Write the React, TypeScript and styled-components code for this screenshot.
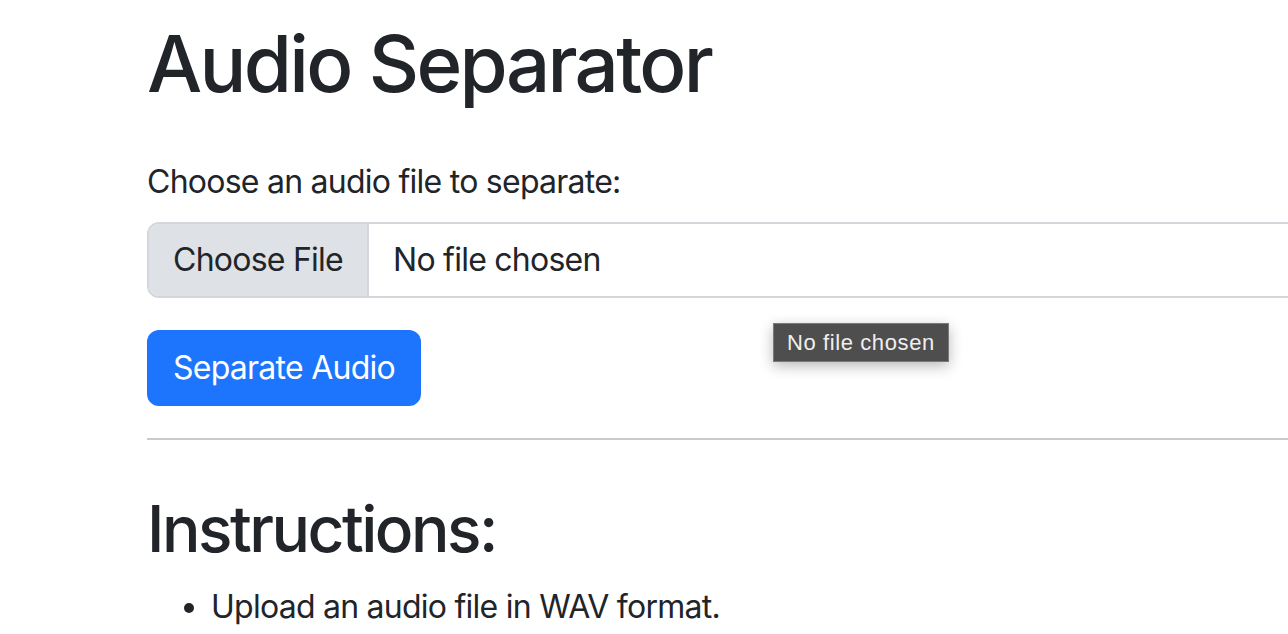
import React from "react";
import styled, { createGlobalStyle } from "styled-components";

const GlobalStyle = createGlobalStyle`
  html, body {
    margin: 0;
    padding: 0;
    overflow: hidden;
    background: #ffffff;
  }
  body {
    font-family: Inter, "Noto Sans", "Liberation Sans", sans-serif;
    color: #212529;
    -webkit-font-smoothing: antialiased;
  }
  * { box-sizing: border-box; }
`;

const Page = styled.main`
  width: 2403px;
  padding: 16px 0 0 147px;
`;

const Title = styled.h1`
  margin: 0 0 46px;
  font-size: 78px;
  font-weight: 500;
  line-height: 96px;
  letter-spacing: -2.7px;
`;

const Form = styled.form`
  display: flex;
  flex-direction: column;
  align-items: flex-start;
`;

const BodyText = `
  font-size: 32px;
  line-height: 48px;
  letter-spacing: -0.75px;
`;

const Label = styled.label`
  display: block;
  margin-bottom: 16px;
  ${BodyText}
`;

const FileField = styled.div`
  position: relative;
  display: flex;
  width: 100%;
  height: 76px;
  margin-bottom: 32px;
  border: 2px solid #d3d7dc;
  border-radius: 12px;
  background: #ffffff;
`;

const FileButton = styled.span`
  display: flex;
  align-items: center;
  padding: 0 24px;
  background: #dee1e5;
  border-right: 2px solid #d3d7dc;
  border-radius: 10px 0 0 10px;
  ${BodyText}
`;

const FileName = styled.span`
  display: flex;
  align-items: center;
  padding: 0 24px;
  ${BodyText}
`;

const Tooltip = styled.div`
  position: absolute;
  left: 624px;
  top: 99px;
  padding: 0 13px;
  height: 39px;
  display: flex;
  align-items: center;
  background: #4e4e4e;
  border: 1px solid #7a7a7a;
  color: #efefef;
  font-family: "Liberation Sans", Arial, sans-serif;
  font-size: 22px;
  letter-spacing: 0.6px;
  box-shadow: 0 4px 14px rgba(0, 0, 0, 0.28);
  white-space: nowrap;
  z-index: 2;
`;

const SubmitButton = styled.button`
  height: 76px;
  padding: 0 24px;
  border: 2px solid #1e75fd;
  border-radius: 12px;
  background: #1e75fd;
  color: #ffffff;
  font-family: inherit;
  cursor: pointer;
  ${BodyText}
`;

const Rule = styled.hr`
  margin: 32px 0 50px;
  border: 0;
  border-top: 2px solid #c9cacb;
`;

const SubTitle = styled.h2`
  margin: 0 0 16px;
  font-size: 64px;
  font-weight: 500;
  line-height: 77px;
  letter-spacing: -2.5px;
`;

const List = styled.ul`
  margin: 0;
  padding-left: 64px;
`;

const Item = styled.li`
  ${BodyText}
`;

export default function App() {
  return (
    <>
      <GlobalStyle />
      <Page>
        <Title>Audio Separator</Title>
        <Form onSubmit={(e) => e.preventDefault()}>
          <Label htmlFor="audio">Choose an audio file to separate:</Label>
          <FileField id="audio">
            <FileButton>Choose File</FileButton>
            <FileName>No file chosen</FileName>
            <Tooltip>No file chosen</Tooltip>
          </FileField>
          <SubmitButton type="submit">Separate Audio</SubmitButton>
        </Form>
        <Rule />
        <SubTitle>Instructions:</SubTitle>
        <List>
          <Item>Upload an audio file in WAV format.</Item>
        </List>
      </Page>
    </>
  );
}
